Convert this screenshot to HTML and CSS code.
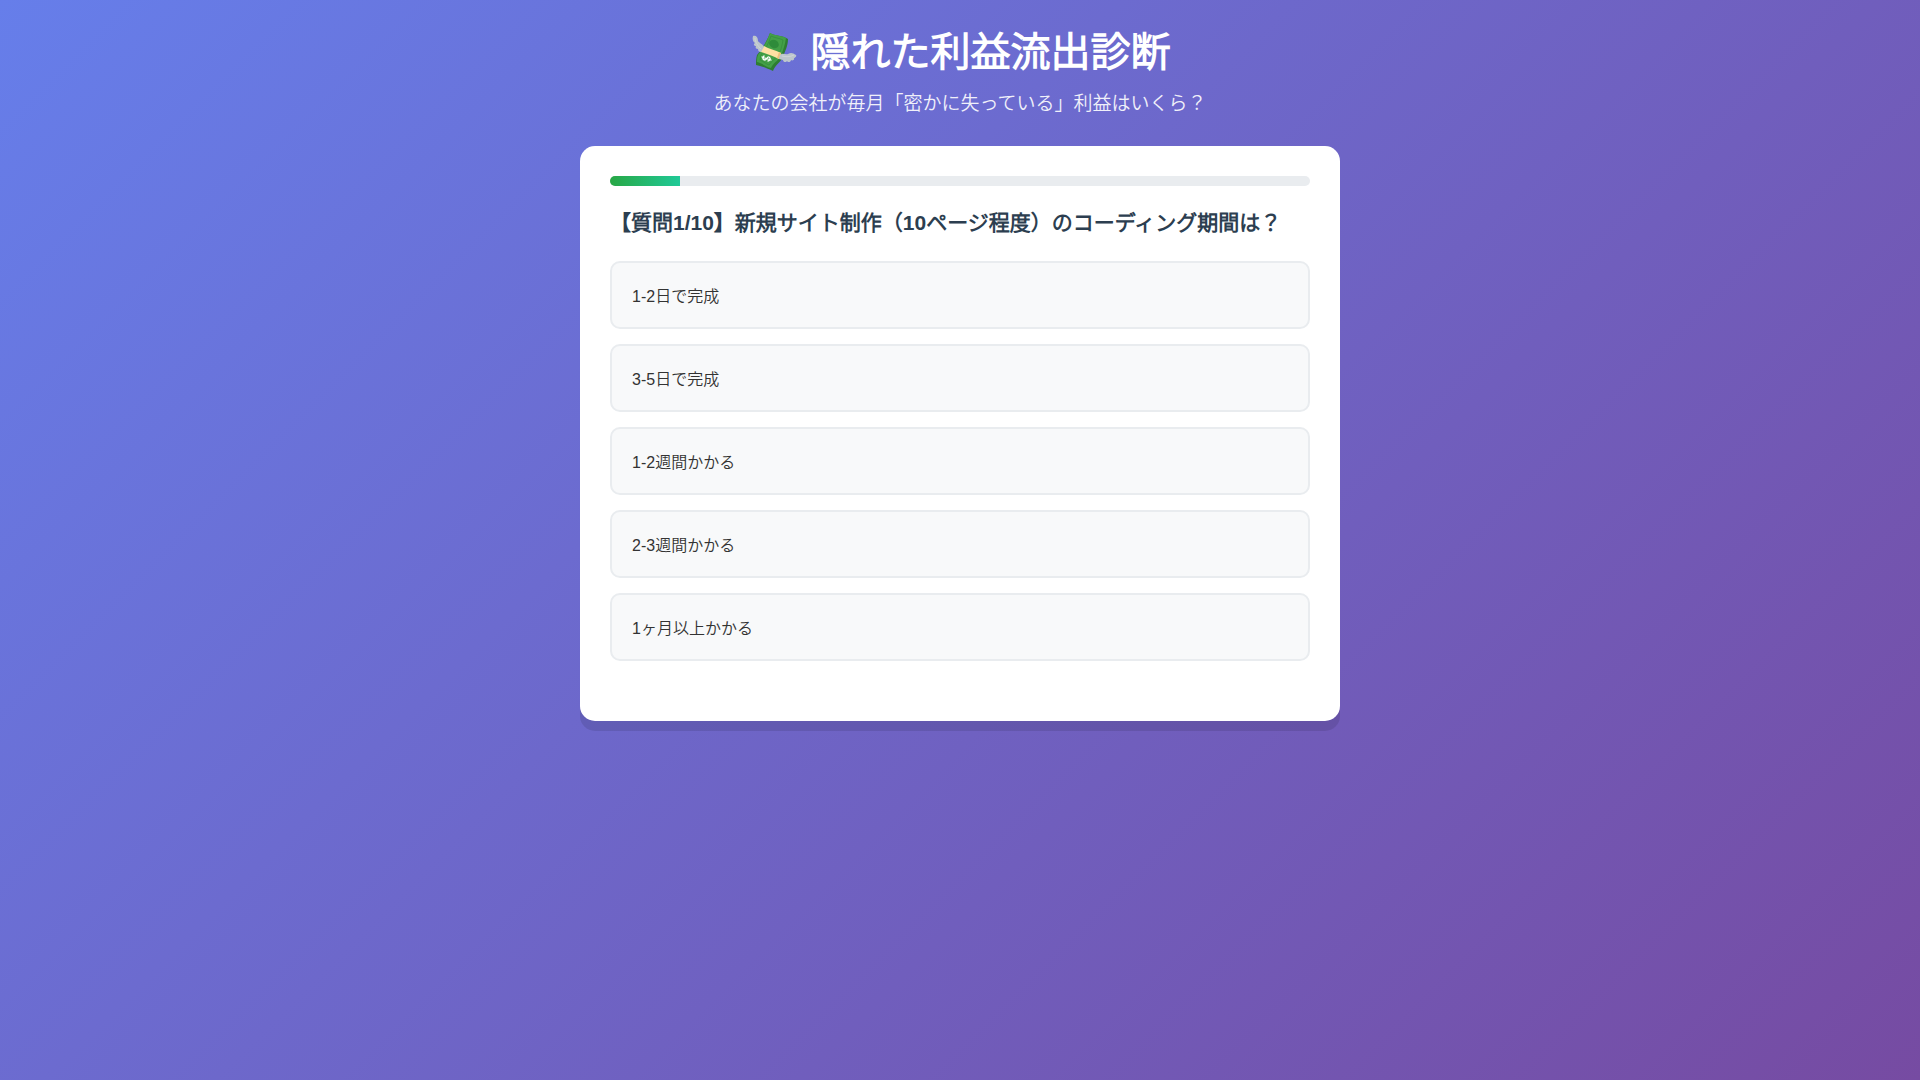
FILE: index.html
```html
<!DOCTYPE html>
<html lang="ja">
<head>
<meta charset="UTF-8">
<meta name="viewport" content="width=device-width, initial-scale=1">
<title>隠れた利益流出診断</title>
<link rel="stylesheet" href="styles.css">
</head>
<body>
<div class="container">
  <header class="header">
    <h1>
      <svg class="money" viewBox="0 0 50 40" aria-hidden="true">
        <path d="M21 1C26 4 33 3 39 7C39 14 36 19 34 25C31 31 26 33 24 39C19 37 13 34 7 33C7 30 7 26 8 23C13 17 18 9 21 1Z" fill="#2e7d32"/>
        <path d="M21 1C26 4 32 3 37 6C36 13 34 18 32 24C29 29 24 31 22 36C17 35 13 31 8 30C8 28 8 25 9 23C14 17 18 9 21 1Z" fill="#43a047"/>
        <path d="M22 4C26 6 30 6 34 8C33 14 32 18 30 22C27 27 23 28 20 33C17 32 14 29 11 28L12 23C16 18 20 11 22 4Z" fill="none" stroke="#338a3c" stroke-width="0.7"/>
        <ellipse cx="25" cy="12" rx="5" ry="4" transform="rotate(25 25 12)" fill="#2e8b3a"/>
        <path d="M15 14C20 17 26 18 32 21C32 23 31 25 30 27C24 24 18 22 12 20C12 18 13 16 15 14Z" fill="#ffe0a3"/>
        <path d="M30 20L32 21L30 27L28 26Z" fill="#f0c27b"/>
        <path d="M15 24C13 26 14 28 16 28C18 28 18 24 20 25C22 26 21 29 19 29M13 25L22 28" fill="none" stroke="#fff" stroke-width="1.3" stroke-linecap="round"/>
        <path d="M4 4C7 3 9 5 9 9C10 11 14 12 15 15L12 20C10 20 9 19 9 17C7 17 6 16 7 14C5 14 4 12 6 11C4 10 3 7 4 4Z" fill="#bdc6cc"/>
        <path d="M6 6C6 10 9 14 12 17" fill="none" stroke="#cdd4d9"/>
        <path d="M31 23C34 20 36 23 39 22C42 20 44 21 47 23C48 24 46 26 45 26C46 28 43 29 42 28C42 30 39 31 38 29C37 31 34 30 34 28L30 27Z" fill="#bdc6cc"/>
        <path d="M33 24C37 25 41 25 45 23" fill="none" stroke="#cdd4d9"/>
      </svg>
      隠れた利益流出診断
    </h1>
    <p>あなたの会社が毎月「密かに失っている」利益はいくら？</p>
  </header>
  <main class="card">
    <div class="progress"><div class="progress-fill" style="width: 10%"></div></div>
    <h2 class="question">【質問1/10】新規サイト制作（10ページ程度）のコーディング期間は？</h2>
    <div class="options">
      <button type="button" class="option">1-2日で完成</button>
      <button type="button" class="option">3-5日で完成</button>
      <button type="button" class="option">1-2週間かかる</button>
      <button type="button" class="option">2-3週間かかる</button>
      <button type="button" class="option">1ヶ月以上かかる</button>
    </div>
  </main>
</div>
</body>
</html>
```

FILE: styles.css
```css
* {
  box-sizing: border-box;
  margin: 0;
  padding: 0;
}

body {
  min-height: 100vh;
  font-family: "Liberation Sans", "Noto Sans CJK JP DemiLight", "Noto Sans CJK JP", sans-serif;
  color: #333;
  background: linear-gradient(135deg, #667eea 0%, #764ba2 100%);
}

.container {
  max-width: 800px;
  margin: 0 auto;
  padding: 20px;
}

.header {
  margin-bottom: 31px;
  text-align: center;
  color: #fff;
}

.header h1 {
  margin-bottom: 10px;
  font-size: 40px;
}

.money {
  width: 50px;
  height: 40px;
  vertical-align: -6px;
}

.header p {
  font-size: 19px;
  opacity: 0.9;
}

.card {
  padding: 30px 30px 60px;
  border-radius: 15px;
  background: #fff;
  box-shadow: 0 10px 0 rgba(0, 0, 0, 0.1);
}

.progress {
  height: 10px;
  margin-bottom: 20px;
  overflow: hidden;
  border-radius: 5px;
  background: #e9ecef;
}

.progress-fill {
  height: 100%;
  background: linear-gradient(90deg, #28a745, #20c997);
}

.question {
  margin-bottom: 25px;
  font-size: 21px;
}

.question {
  color: #2c3e50;
}

.options {
  display: grid;
  grid-auto-rows: minmax(68px, auto);
  gap: 15px;
}

.option {
  padding: 20px;
  border: 2px solid #e9ecef;
  border-radius: 10px;
  background: #f8f9fa;
  font: inherit;
  font-size: 16px;
  text-align: left;
  color: #333;
  cursor: pointer;
}
```
